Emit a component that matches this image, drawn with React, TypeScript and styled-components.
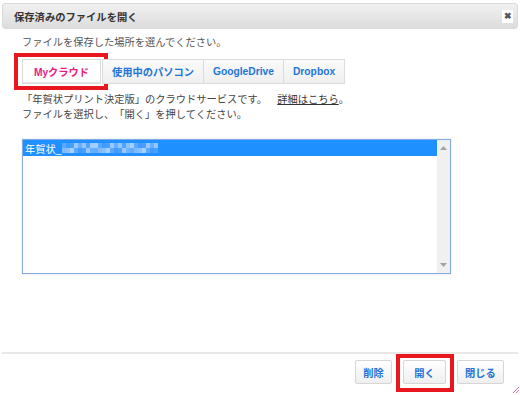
import React from "react";
import styled, { createGlobalStyle } from "styled-components";

const Global = createGlobalStyle`
  html, body { margin: 0; padding: 0; background: #fff; }
  body { font-family: "Liberation Sans", "Noto Sans CJK JP", sans-serif; }
`;

const FONT = `"Liberation Sans", "Noto Sans CJK JP", sans-serif`;
const BLUE = "#1f74d6";
const RED = "#e8161e";

const Dialog = styled.div`
  position: relative;
  width: 520px;
  height: 395px;
  box-sizing: border-box;
  padding: 3px 2px 0 2px;
  display: flex;
  flex-direction: column;
  background: #fff;
  font-family: ${FONT};
  font-size: 10.25px;
  color: #444;
  text-spacing-trim: space-all;
`;

const TitleBar = styled.div`
  height: 26px;
  box-sizing: border-box;
  display: flex;
  align-items: center;
  justify-content: space-between;
  padding: 0 4px 0 11px;
  border: 1px solid #dadada;
  border-radius: 3px;
  background: linear-gradient(#f1f1f1, #dcdcdc);
`;

const Title = styled.span`
  font-weight: bold;
  font-size: 10.3px;
  color: #333;
`;

const CloseButton = styled.div`
  width: 11px;
  height: 13px;
  background: #fff;
  display: flex;
  align-items: center;
  justify-content: center;
  color: #555;
  font-size: 9px;
  font-weight: bold;
  line-height: 1;
`;

const Content = styled.div`
  flex: 1;
  display: flex;
  flex-direction: column;
  padding: 0 0 0 20px;
`;

const Instruction = styled.div`
  margin-top: 7px;
  line-height: 14px;
  color: #555;
`;

const Tabs = styled.div`
  margin-top: 9px;
  display: flex;
`;

const Tab = styled.div<{ $active?: boolean }>`
  position: relative;
  height: 25px;
  box-sizing: border-box;
  padding: 0 9px;
  display: flex;
  align-items: center;
  white-space: nowrap;
  font-weight: bold;
  border: 1px solid #dcdcdc;
  margin-left: -1px;
  &:first-child { margin-left: 0; }
  color: ${(p) => (p.$active ? "#ec1a83" : BLUE)};
  background: ${(p) => (p.$active ? "#fff" : "linear-gradient(#fbfbfb, #efefef)")};
  ${(p) =>
    p.$active &&
    `
    width: 79px;
    padding: 0;
    justify-content: center;
    margin-right: 2px;
    box-shadow: inset 0 -1px 0 #e6e6e6;
    &::after {
      content: "";
      position: absolute;
      left: -9px;
      right: -8px;
      top: -7px;
      bottom: -7px;
      border: 4px solid ${RED};
    }
  `}
`;

const Description = styled.div`
  margin-top: 8px;
  line-height: 15px;
  color: #444;
`;

const Link = styled.span`
  text-decoration: underline;
  color: #333;
`;

const ListBox = styled.div`
  margin-top: 17px;
  width: 429px;
  height: 135px;
  box-sizing: border-box;
  border: 1px solid #86a9e2;
  box-shadow: 0 0 1px #aac4ee;
  display: flex;
  background: #fff;
`;

const Options = styled.div`
  flex: 1;
`;

const OptionRow = styled.div<{ $selected?: boolean }>`
  height: 16px;
  display: flex;
  align-items: center;
  padding-left: 2px;
  color: ${(p) => (p.$selected ? "#fff" : "#333")};
  background: ${(p) => (p.$selected ? "#1e90ff" : "transparent")};
`;

const Mosaic = styled.div`
  display: grid;
  grid-template-columns: repeat(24, 4px);
  grid-auto-rows: 5px;
  margin-left: 1px;
`;

const Cell = styled.span`
  display: block;
`;

const Scrollbar = styled.div`
  width: 13px;
  background: #f0f0f0;
  display: flex;
  flex-direction: column;
  justify-content: space-between;
  align-items: center;
  padding: 6px 0 6px;
`;

const Arrow = styled.svg`
  display: block;
`;

const Footer = styled.div`
  border-top: 2px solid #e8e8e8;
  display: flex;
  justify-content: flex-end;
  align-items: flex-start;
  gap: 11px;
  padding: 6px 14px 0 0;
  height: 43px;
  box-sizing: border-box;
`;

const Button = styled.div<{ $w: number; $highlight?: boolean }>`
  position: relative;
  width: ${(p) => p.$w}px;
  height: 24px;
  box-sizing: border-box;
  border: 1px solid #d6d6d6;
  border-radius: 2px;
  background: linear-gradient(#ffffff, #efefef);
  display: flex;
  align-items: center;
  justify-content: center;
  color: ${BLUE};
  font-weight: bold;
  ${(p) =>
    p.$highlight &&
    `
    &::after {
      content: "";
      position: absolute;
      left: -8px;
      right: -9px;
      top: -7px;
      bottom: -9px;
      border: 4px solid ${RED};
    }
  `}
`;

const Grip = styled.svg`
  position: absolute;
  right: 1px;
  bottom: 2px;
`;

const mosaicColors = [
  "#5aa9ff","#7dbaff","#4ea2ff","#9ccbff","#68afff","#3f9bff","#88c1ff","#72b5ff",
  "#55a7ff","#93c6ff","#4aa0ff","#a6d0ff","#62acff","#80bcff","#50a4ff","#98c8ff",
];

export default function App() {
  const cells = Array.from({ length: 48 }, (_, i) => mosaicColors[(i * 5 + (i >> 3) * 3) % mosaicColors.length]);
  return (
    <>
      <Global />
      <Dialog>
        <TitleBar>
          <Title>保存済みのファイルを開く</Title>
          <CloseButton>✖</CloseButton>
        </TitleBar>
        <Content>
          <Instruction>ファイルを保存した場所を選んでください。</Instruction>
          <Tabs>
            <Tab $active>Myクラウド</Tab>
            <Tab>使用中のパソコン</Tab>
            <Tab>GoogleDrive</Tab>
            <Tab>Dropbox</Tab>
          </Tabs>
          <Description>
            <div>
              「年賀状プリント決定版」のクラウドサービスです。　<Link>詳細はこちら</Link>。
            </div>
            <div>ファイルを選択し、「開く」を押してください。</div>
          </Description>
          <ListBox>
            <Options>
              <OptionRow $selected>
                年賀状_
                <Mosaic>
                  {cells.map((c, i) => (
                    <Cell key={i} style={{ background: c }} />
                  ))}
                </Mosaic>
              </OptionRow>
            </Options>
            <Scrollbar>
              <Arrow width="7" height="4" viewBox="0 0 7 4">
                <polygon points="0,4 3.5,0 7,4" fill="#a3a3a3" />
              </Arrow>
              <Arrow width="7" height="4" viewBox="0 0 7 4">
                <polygon points="0,0 3.5,4 7,0" fill="#a3a3a3" />
              </Arrow>
            </Scrollbar>
          </ListBox>
        </Content>
        <Footer>
          <Button $w={37}>削除</Button>
          <Button $w={43} $highlight>開く</Button>
          <Button $w={47}>閉じる</Button>
        </Footer>
        <Grip width="6" height="6" viewBox="0 0 6 6">
          <line x1="0" y1="6" x2="6" y2="0" stroke="#e06ab8" strokeWidth="1" />
          <line x1="3" y1="6" x2="6" y2="3" stroke="#e06ab8" strokeWidth="1" />
        </Grip>
      </Dialog>
    </>
  );
}
